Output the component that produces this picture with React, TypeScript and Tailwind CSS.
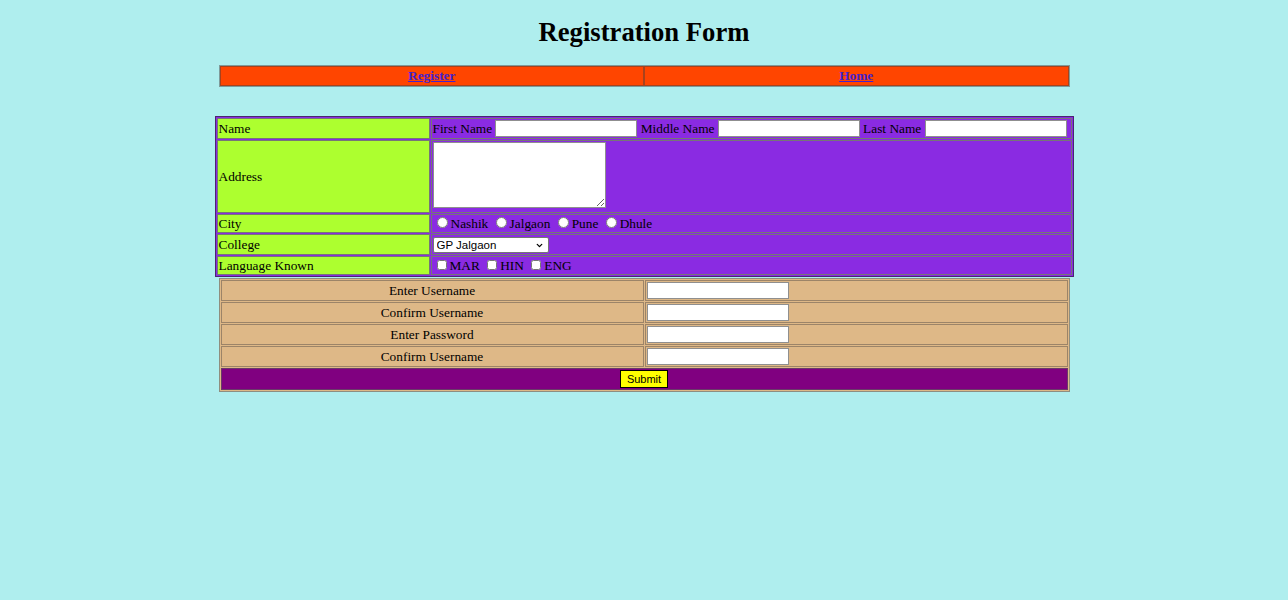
import { ChevronDown } from "lucide-react";

const cellMain = "border border-[#767676] p-px";
const labelMain = "w-[213px] border border-[#767676] bg-[#adff2f] p-px text-left align-middle";
const cellTan = "w-1/2 border border-[#9c8468] p-px";
const textInput =
  "h-[17px] w-[142px] border border-[#8f8f8f] bg-white px-[2px] font-['Liberation_Sans',Arial,sans-serif] text-[11px]";
const radio = "m-0 mr-[3px] ml-[4px] h-[11px] w-[11px]";
const check = "m-0 mr-[3px] ml-[4px] h-[10px] w-[10px]";

function Field() {
  return <input type="text" className={textInput} />;
}

export default function App() {
  return (
    <div className="min-h-[600px] bg-[#afeeee] font-['Liberation_Serif','Times_New_Roman',serif] text-[13.33px] leading-[15px] text-black">
      <div className="pt-[17px] pb-[18px]">
        <h1 className="text-center text-[26.67px] font-bold leading-[30px]">Registration Form</h1>
      </div>

      <table className="mx-auto w-[851px] border-separate border-spacing-0 border border-[#7f9a9a] bg-[#ff4500]">
        <tbody>
          <tr>
            <td className="w-1/2 border border-[#a8421c] p-px text-center leading-[16px]">
              <a href="#" className="font-bold text-[#4422cc] underline">
                Register
              </a>
            </td>
            <td className="w-1/2 border border-[#a8421c] p-px text-center leading-[16px]">
              <a href="#" className="font-bold text-[#4422cc] underline">
                Home
              </a>
            </td>
          </tr>
        </tbody>
      </table>

      <table className="mx-auto mt-[29px] w-[859px] border-separate border-spacing-px border border-[#4a2670] bg-[#8a2be2]">
        <tbody>
          <tr>
            <td className={labelMain}>Name</td>
            <td className={`${cellMain} whitespace-nowrap`}>
              First Name <Field /> Middle Name <Field /> Last Name <Field />
            </td>
          </tr>
          <tr>
            <td className={labelMain}>Address</td>
            <td className={cellMain}>
              <textarea className="h-[66px] w-[173px] border border-[#8f8f8f] bg-white" />
            </td>
          </tr>
          <tr>
            <td className={labelMain}>City</td>
            <td className={cellMain}>
              <input type="radio" name="city" className={radio} />
              Nashik <input type="radio" name="city" className={radio} />
              Jalgaon <input type="radio" name="city" className={radio} />
              Pune <input type="radio" name="city" className={radio} />
              Dhule
            </td>
          </tr>
          <tr>
            <td className={labelMain}>College</td>
            <td className={cellMain}>
              <span className="relative inline-block align-middle">
                <select className="block h-[16px] w-[116px] appearance-none rounded-[2px] border border-[#767676] bg-white pl-[3px] font-['Liberation_Sans',Arial,sans-serif] text-[11.5px] leading-[14px]">
                  <option>GP Jalgaon</option>
                  <option>GP Nashik</option>
                  <option>GP Pune</option>
                </select>
                <ChevronDown
                  className="pointer-events-none absolute top-[4px] right-[5px]"
                  size={9}
                  strokeWidth={3.5}
                />
              </span>
            </td>
          </tr>
          <tr>
            <td className={labelMain}>Language Known</td>
            <td className={cellMain}>
              <input type="checkbox" className={check} />
              MAR <input type="checkbox" className={check} />
              HIN <input type="checkbox" className={check} />
              ENG
            </td>
          </tr>
        </tbody>
      </table>

      <table className="mx-auto mt-px w-[851px] border-separate border-spacing-px border border-[#8e8e80] bg-[#deb887]">
        <tbody>
          {["Enter Username", "Confirm Username", "Enter Password", "Confirm Username"].map((label, i) => (
            <tr key={i}>
              <td className={`${cellTan} text-center`}>{label}</td>
              <td className={`${cellTan} text-left`}>
                <Field />
              </td>
            </tr>
          ))}
          <tr>
            <td colSpan={2} className="border border-[#6a3a6a] bg-[#800080] p-px text-center">
              <button
                type="submit"
                className="h-[18px] border border-black bg-[#ffff00] px-[6px] font-['Liberation_Sans',Arial,sans-serif] text-[11px] leading-[14px]"
              >
                Submit
              </button>
            </td>
          </tr>
        </tbody>
      </table>
    </div>
  );
}
